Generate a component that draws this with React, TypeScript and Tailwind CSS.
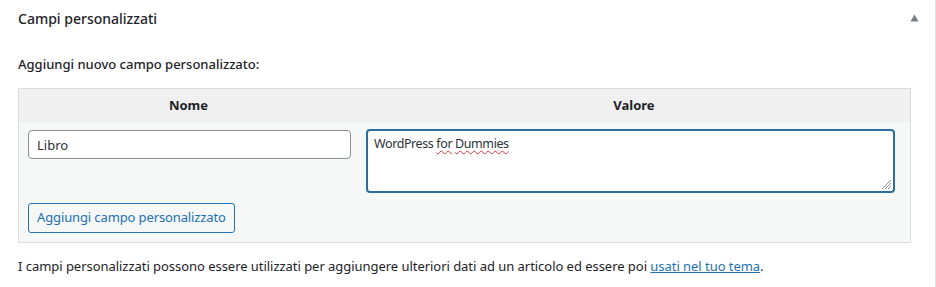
export default function App() {
  return (
    <div className="w-[936px] h-[287px] bg-white border-r border-[#e0e0e0] text-[#1d2327] font-['Segoe_UI','Noto_Sans',sans-serif] text-[13px]">
      {/* postbox header */}
      <div className="h-[37px] flex items-center justify-between pl-[18px] pr-[16px]">
        <h2 className="text-[14px] font-medium leading-none">Campi personalizzati</h2>
        <svg width="9" height="8" viewBox="0 0 9 8" className="mt-[-1px]">
          <path d="M4.5 0.5 L8.5 7.5 L0.5 7.5 Z" fill="#787c82" />
        </svg>
      </div>

      <div className="pl-[18px] pr-[24px]">
        <p className="mt-[17px] leading-[20px] font-medium">Aggiungi nuovo campo personalizzato:</p>

        <div className="mt-[14px] border border-[#dcdcde]">
          <div className="grid grid-cols-[339px_1fr] h-[33px] bg-[#f0f0f1] font-bold items-center text-center">
            <div>Nome</div>
            <div>Valore</div>
          </div>

          <div className="bg-[#f6f7f7] pt-[7px] pb-[9px]">
            <div className="grid grid-cols-[339px_1fr]">
              <div className="pl-[9px] pr-[7px] pt-[1px]">
                <input
                  readOnly
                  value="Libro"
                  className="w-full h-[29px] px-[8px] bg-white border border-[#8c8f94] rounded-[4px] outline-none text-[13px] text-[#2c3338]"
                />
              </div>
              <div className="pl-[8px] pr-[15px]">
                <div className="relative h-[64px] bg-white border-2 border-[#2c6ea1] rounded-[4px] px-[6px] pt-[3px] leading-[20px] text-[#2c3338] text-[12.5px] tracking-[-0.4px]">
                  WordPress{" "}
                  <span className="underline decoration-wavy decoration-[#d63638] decoration-1 underline-offset-2">for</span>{" "}
                  <span className="underline decoration-wavy decoration-[#d63638] decoration-1 underline-offset-2">Dummies</span>
                  <svg width="11" height="11" viewBox="0 0 11 11" className="absolute right-[1px] bottom-[1px]">
                    <path d="M10 1 L1 10 M10 4 L4 10 M10 7 L7 10" stroke="#8c8f94" strokeWidth="1" />
                  </svg>
                </div>
              </div>
            </div>

            <div className="pl-[9px] mt-[10px]">
              <button className="h-[30px] px-[8px] border border-[#2271b1] rounded-[3px] bg-[#f6f7f7] text-[#2271b1] text-[13px] tracking-[-0.12px]">
                Aggiungi campo personalizzato
              </button>
            </div>
          </div>
        </div>
      </div>

      <p className="pl-[18px] mt-[13px] leading-[20px] tracking-[-0.04px]">
        I campi personalizzati possono essere utilizzati per aggiungere ulteriori dati ad un articolo ed essere poi{" "}
        <a href="#" className="text-[#2271b1] underline">usati nel tuo tema</a>.
      </p>
    </div>
  );
}
